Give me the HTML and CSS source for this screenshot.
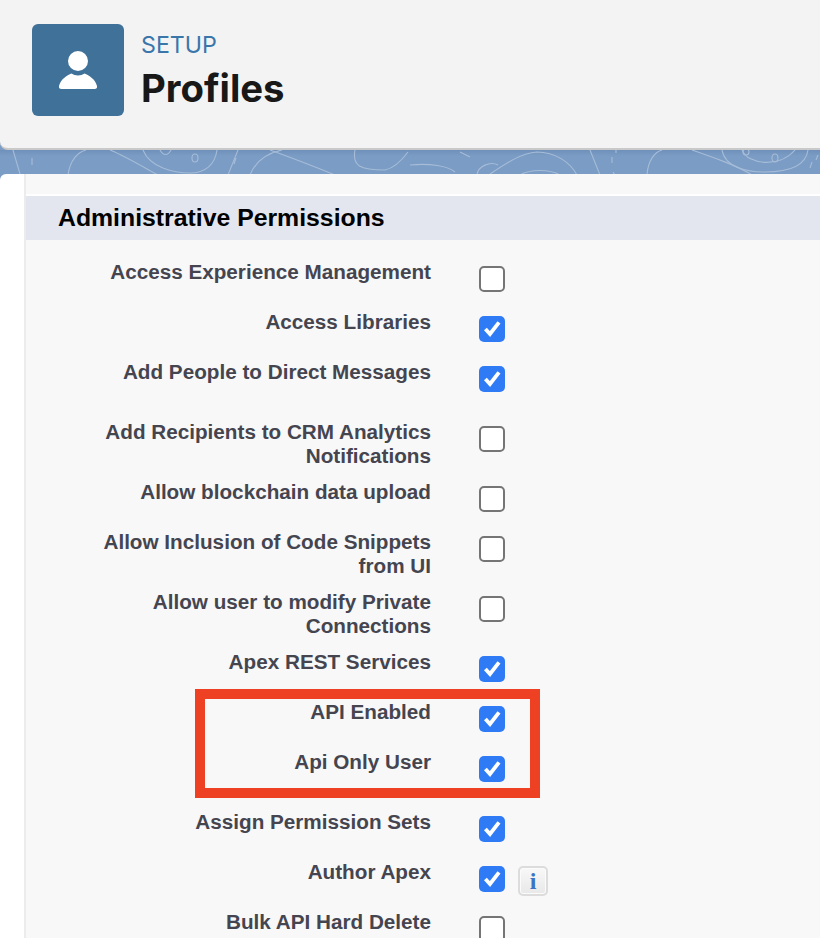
FILE: index.html
```html
<!DOCTYPE html>
<html lang="en">
<head>
<meta charset="UTF-8">
<title>Profiles</title>
<link rel="stylesheet" href="styles.css">
</head>
<body>

<svg class="defs" width="0" height="0">
  <symbol id="tick" viewBox="0 0 26 26">
    <path d="M6.4 13 L11 18 L20 6.4" fill="none" stroke="#fff" stroke-width="3.8"/>
  </symbol>
</svg>

<div class="topo">
  <svg width="820" height="25" viewBox="0 150 820 25" fill="none" stroke="#a6bcd8" stroke-width="1.1">
    <path d="M13 150 L20 174"/>
    <path d="M32 158 v7"/>
    <path d="M68 175 C70 160 78 152 86 150"/>
    <path d="M110 150 C125 156 145 168 158 175"/>
    <path d="M143 150 C150 168 175 173 190 173 C205 173 215 165 217 150"/>
    <path d="M160 150 C163 156 168 156 171 150"/>
    <ellipse cx="195" cy="158" rx="3" ry="4"/>
    <path d="M238 150 L228 175 M236 158 L234 164"/>
    <path d="M250 175 C256 160 268 153 282 150"/>
    <path d="M270 150 C292 158 318 168 335 175"/>
    <path d="M355 150 C352 166 360 170 385 170 C395 168 402 160 408 152"/>
    <path d="M460 152 L470 157"/>
    <path d="M410 165 C430 163 448 166 455 172"/>
    <path d="M477 175 C478 166 490 161 498 165"/>
    <path d="M490 174 C508 162 522 153 537 152 C555 152 570 162 577 175"/>
    <path d="M520 175 C530 169 550 169 560 175"/>
    <path d="M590 150 L600 175 M612 157 v6 M616 150 v3 M613 172 l2 3"/>
    <path d="M647 175 C648 160 655 152 662 150"/>
    <path d="M692 150 C715 158 738 166 752 175"/>
    <path d="M722 150 C725 168 748 172 765 172 C790 172 806 165 808 150"/>
    <path d="M742 150 C748 165 780 168 795 150"/>
    <ellipse cx="775" cy="158" rx="3" ry="4"/>
    <ellipse cx="746" cy="152" rx="3" ry="3"/>
    <path d="M812 162 l-2 6 M818 155 l-2 5"/>
  </svg>
</div>

<header class="page-head">
  <div class="head-icon">
    <svg width="92" height="92" viewBox="0 0 92 92">
      <circle cx="46" cy="37" r="10" fill="#fff"/>
      <path d="M29.5 65 C27.5 65 26.6 63.8 27 62 C28.5 55.5 35 51 39.5 49.5 C43 52 49 52 52.5 49.5 C57 51 63.5 55.5 65 62 C65.4 63.8 64.5 65 62.5 65 Z" fill="#fff"/>
    </svg>
  </div>
  <div class="head-text">
    <div class="head-kicker">SETUP</div>
    <h1 class="head-title">Profiles</h1>
  </div>
</header>

<div class="panel">
  <div class="panel-side"></div>
  <div class="panel-main">
    <h2 class="section-title">Administrative Permissions</h2>
    <div class="perm-list">
      <div class="perm-row">
        <div class="perm-label">Access Experience Management</div>
        <span class="box"></span>
      </div>
      <div class="perm-row">
        <div class="perm-label">Access Libraries</div>
        <span class="box on"><svg width="26" height="26"><use href="#tick"/></svg></span>
      </div>
      <div class="perm-row tall">
        <div class="perm-label">Add People to Direct Messages</div>
        <span class="box on"><svg width="26" height="26"><use href="#tick"/></svg></span>
      </div>
      <div class="perm-row">
        <div class="perm-label">Add Recipients to CRM Analytics Notifications</div>
        <span class="box"></span>
      </div>
      <div class="perm-row">
        <div class="perm-label">Allow blockchain data upload</div>
        <span class="box"></span>
      </div>
      <div class="perm-row">
        <div class="perm-label">Allow Inclusion of Code Snippets from UI</div>
        <span class="box"></span>
      </div>
      <div class="perm-row">
        <div class="perm-label">Allow user to modify Private Connections</div>
        <span class="box"></span>
      </div>
      <div class="perm-row">
        <div class="perm-label">Apex REST Services</div>
        <span class="box on"><svg width="26" height="26"><use href="#tick"/></svg></span>
      </div>
      <div class="perm-row">
        <div class="perm-label">API Enabled</div>
        <span class="box on"><svg width="26" height="26"><use href="#tick"/></svg></span>
      </div>
      <div class="perm-row tall">
        <div class="perm-label">Api Only User</div>
        <span class="box on"><svg width="26" height="26"><use href="#tick"/></svg></span>
      </div>
      <div class="perm-row">
        <div class="perm-label">Assign Permission Sets</div>
        <span class="box on"><svg width="26" height="26"><use href="#tick"/></svg></span>
      </div>
      <div class="perm-row">
        <div class="perm-label">Author Apex</div>
        <span class="box on"><svg width="26" height="26"><use href="#tick"/></svg></span>
        <span class="info-btn">i</span>
      </div>
      <div class="perm-row">
        <div class="perm-label">Bulk API Hard Delete</div>
        <span class="box"></span>
      </div>
    </div>
  </div>
</div>

<div class="callout"></div>

</body>
</html>
```

FILE: styles.css
```css
html, body {
  margin: 0;
  height: 938px;
  overflow: hidden;
}
body {
  position: relative;
  background: #7b9cc4;
  font-family: "Liberation Sans", Arial, sans-serif;
}
.defs {
  position: absolute;
}
.topo {
  position: absolute;
  top: 150px;
  left: 0;
  width: 820px;
  height: 25px;
  overflow: hidden;
  background: linear-gradient(#6f90ba, #7b9cc4 6px);
}
.topo svg {
  display: block;
}
.page-head {
  position: relative;
  box-sizing: border-box;
  height: 150px;
  display: flex;
  align-items: flex-start;
  gap: 17px;
  padding: 24px 32px 0;
  background: #f3f3f3;
  border-bottom: 2px solid #c9c9c9;
  border-bottom-left-radius: 8px;
}
.head-icon {
  width: 92px;
  height: 92px;
  background: #3f7199;
  border-radius: 6px;
}
.head-icon svg {
  display: block;
}
.head-kicker {
  font-family: Inter, sans-serif;
  font-size: 23.2px;
  line-height: 28px;
  margin-top: 7px;
  color: #3b76ab;
}
.head-title {
  font-family: Inter, sans-serif;
  font-size: 38.3px;
  line-height: 46px;
  font-weight: 700;
  margin: 6px 0 0;
  color: #181818;
}
.panel {
  position: relative;
  display: flex;
  margin-top: 24px;
  height: 764px;
  background: #fff;
  border-top-left-radius: 6px;
}
.panel-side {
  width: 24px;
  flex: none;
  border-right: 2px solid #ececec;
}
.panel-main {
  flex: 1;
  padding-top: 20px;
  background: #f8f8f8;
}
.section-title {
  margin: 0;
  height: 46px;
  box-sizing: border-box;
  padding-left: 32px;
  border-top: 2px solid #fff;
  background: #e3e6ef;
  background-clip: padding-box;
  font-size: 24.8px;
  line-height: 44px;
  font-weight: 700;
  color: #000;
}
.perm-list {
  padding-top: 20px;
}
.perm-row {
  display: flex;
  align-items: flex-start;
  min-height: 50px;
}
.perm-row.tall {
  min-height: 60px;
}
.perm-label {
  box-sizing: border-box;
  width: 405px;
  padding: 0 0 12px 60px;
  text-align: right;
  font-size: 20.7px;
  line-height: 24px;
  font-weight: 700;
  color: #454550;
}
.box {
  box-sizing: border-box;
  width: 26px;
  height: 26px;
  margin: 6px 0 0 48px;
  border: 2px solid #757575;
  border-radius: 5px;
  background: #fff;
  flex: none;
}
.box.on {
  border: 0;
  background: #2f7bf6;
}
.box svg {
  display: block;
}
.info-btn {
  box-sizing: border-box;
  width: 30px;
  height: 30px;
  margin: 6px 0 0 13px;
  border: 2px solid #dcdcdc;
  border-radius: 5px;
  background: linear-gradient(#f8f8f8, #e8e8e8);
  box-shadow: inset 0 0 0 1px #fbfbfb;
  text-align: center;
  font-family: "Liberation Serif", serif;
  font-size: 24px;
  line-height: 26px;
  font-weight: 700;
  color: #3a74c4;
}
.callout {
  position: absolute;
  left: 195px;
  top: 689px;
  width: 345px;
  height: 109px;
  box-sizing: border-box;
  border: 10px solid #ee4023;
}
```
